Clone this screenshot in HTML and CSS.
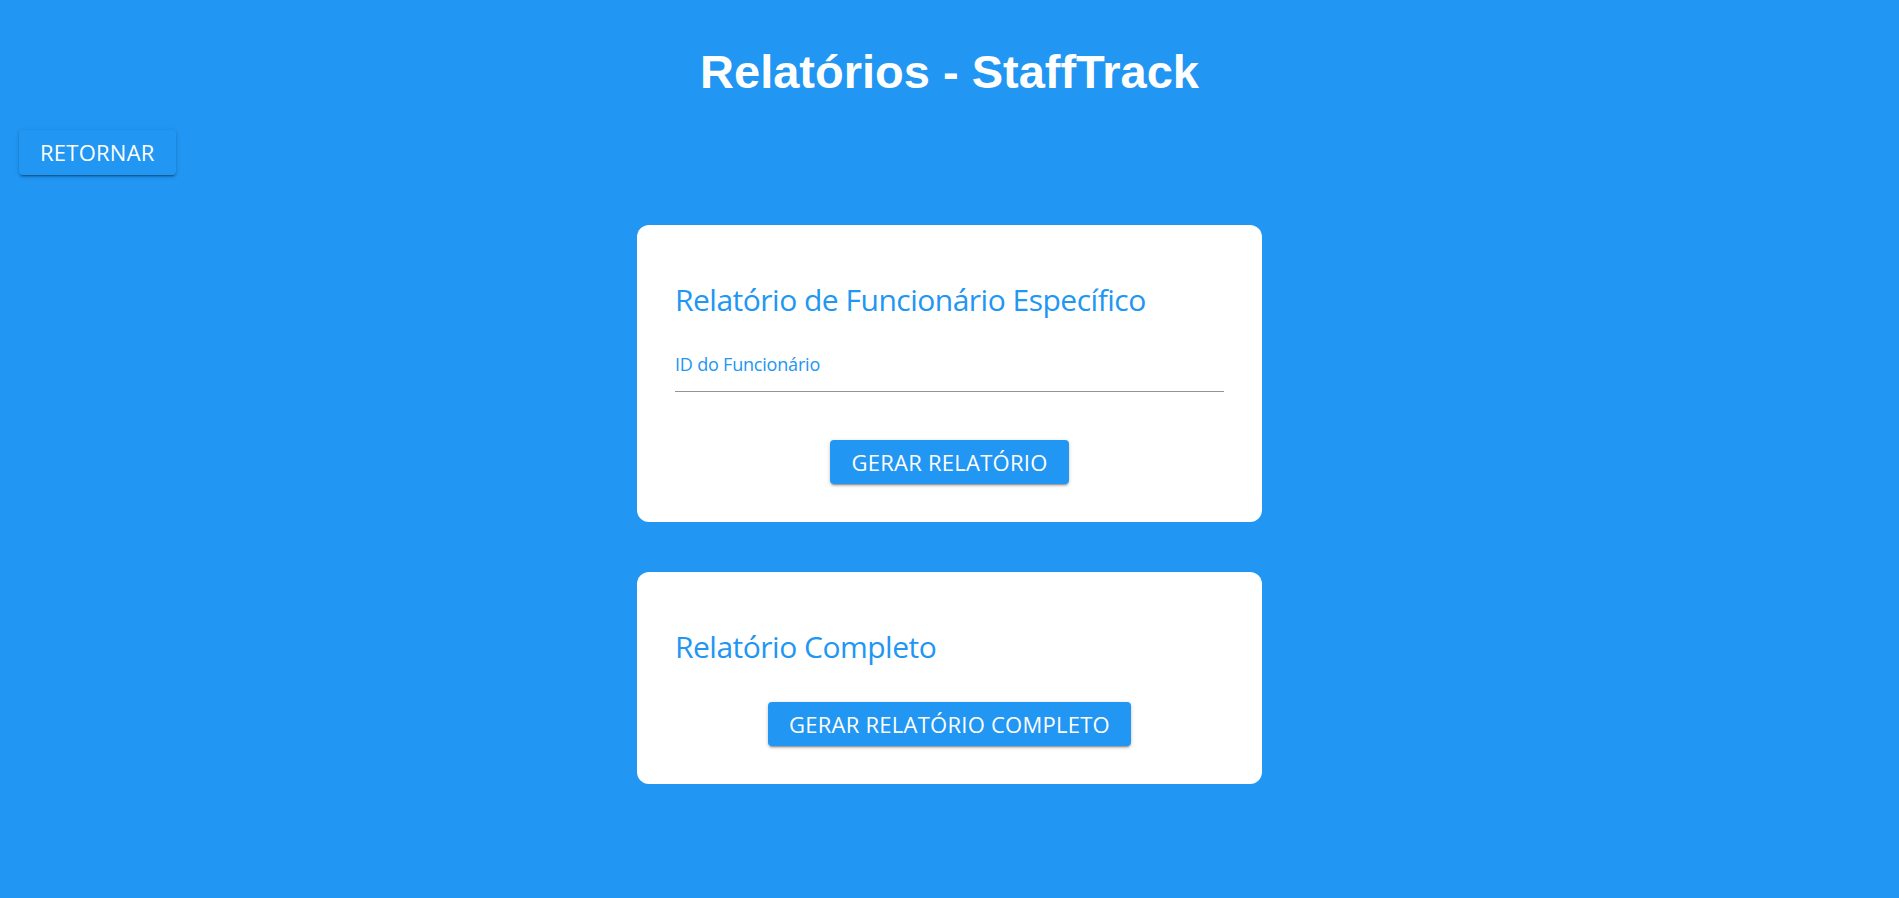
FILE: index.html
```html
<!DOCTYPE html>
<html lang="pt-BR">
<head>
<meta charset="utf-8">
<title>Relatórios - StaffTrack</title>
<link rel="stylesheet" href="styles.css">
</head>
<body>
  <h1 class="page-title">Relatórios - StaffTrack</h1>
  <div class="back-row">
    <button class="btn btn-back" type="button">RETORNAR</button>
  </div>
  <main class="reports">
    <section class="card">
      <h2 class="card-title">Relatório de Funcionário Específico</h2>
      <div class="field">
        <label class="field-label" for="emp-id">ID do Funcionário</label>
        <input class="field-input" id="emp-id" type="text">
      </div>
      <div class="card-actions card-actions-form">
        <button class="btn" type="button">GERAR RELATÓRIO</button>
      </div>
    </section>
    <section class="card">
      <h2 class="card-title">Relatório Completo</h2>
      <div class="card-actions card-actions-full">
        <button class="btn" type="button">GERAR RELATÓRIO COMPLETO</button>
      </div>
    </section>
  </main>
</body>
</html>
```

FILE: styles.css
```css
html, body {
  margin: 0;
  padding: 0;
}

body {
  background: #2196f3;
  min-height: 100vh;
  font-family: "Open Sans", "Noto Sans", sans-serif;
}

.page-title {
  margin: 45px 0 0;
  font-family: "Liberation Sans", Arial, sans-serif;
  font-weight: 700;
  font-size: 47px;
  line-height: 54px;
  color: #ffffff;
  text-align: center;
}

.back-row {
  padding: 31px 19px 0;
  display: flex;
}

.btn {
  font-family: "Open Sans", "Noto Sans", sans-serif;
  font-size: 22px;
  font-weight: 400;
  letter-spacing: 0.25px;
  height: 44px;
  line-height: 44px;
  padding: 0 21px;
  border: none;
  border-radius: 4px;
  background: #2196f3;
  color: #ffffff;
  cursor: pointer;
  box-shadow: 0 3px 1px -2px rgba(0, 0, 0, 0.22),
              0 2px 2px 0 rgba(0, 0, 0, 0.16),
              0 1px 5px 0 rgba(0, 0, 0, 0.14);
  white-space: nowrap;
}

.btn-back {
  height: 45px;
  line-height: 45px;
}

.reports {
  margin-top: 50px;
  display: flex;
  flex-direction: column;
  align-items: center;
  gap: 50px;
}

.card {
  box-sizing: border-box;
  width: 625px;
  background: #ffffff;
  border-radius: 12px;
  padding: 55px 38px 38px;
  display: flex;
  flex-direction: column;
}

.card-title {
  margin: 0;
  font-size: 30px;
  font-weight: 400;
  line-height: 40px;
  letter-spacing: -0.5px;
  color: #2196f3;
}

.field {
  margin-top: 32px;
  display: flex;
  flex-direction: column;
}

.field-label {
  font-size: 18px;
  line-height: 24px;
  letter-spacing: -0.2px;
  color: #2196f3;
}

.field-input {
  box-sizing: border-box;
  height: 16px;
  margin: 0;
  padding: 0;
  border: none;
  border-bottom: 1px solid #949494;
  background: transparent;
  outline: none;
  font-family: inherit;
}

.card-actions {
  display: flex;
  justify-content: center;
}

.card-actions-form {
  margin-top: 48px;
}

.card-actions-full {
  margin-top: 35px;
}
```
